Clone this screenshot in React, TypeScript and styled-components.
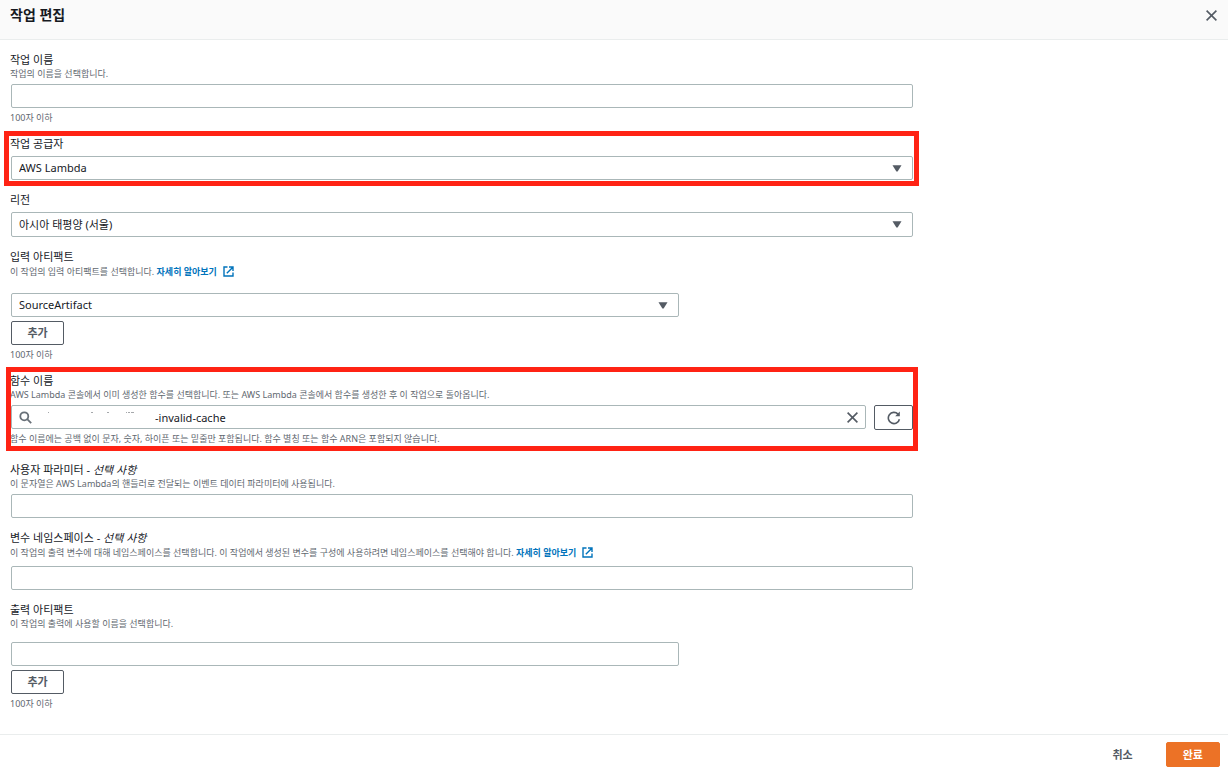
import React, { useState } from "react";
import styled, { createGlobalStyle, css } from "styled-components";

const GlobalStyle = createGlobalStyle`
  *, *::before, *::after { box-sizing: border-box; }
  body {
    margin: 0;
    background: #fff;
    color: #16191f;
    font-family: "Noto Sans", "Noto Sans CJK KR", sans-serif;
    font-size: 11px;
    line-height: 14px;
  }
  button, input, select { font: inherit; color: inherit; margin: 0; }
`;

const Page = styled.div`
  display: flex;
  flex-direction: column;
  min-height: 100vh;
`;

const Header = styled.header`
  display: flex;
  justify-content: space-between;
  align-items: flex-start;
  padding: 5px 10px 14px;
  background: #fafafa;
  border-bottom: 1px solid #eaeded;
`;

const Title = styled.h1`
  margin: 0;
  font-size: 14px;
  line-height: 20px;
  font-weight: 700;
`;

const IconButton = styled.button`
  display: flex;
  align-items: center;
  justify-content: center;
  padding: 0;
  border: 0;
  background: none;
  color: #545b64;
  cursor: pointer;
`;

const CloseButton = styled(IconButton)`
  width: 14px;
  height: 20px;
`;

const Form = styled.form`
  flex: 1;
  display: grid;
  grid-template-columns: 3fr 1fr;
  padding: 13px 14px 23px 11px;
`;

const Fields = styled.div`
  min-width: 0;
`;

const Field = styled.div<{ $gap?: number }>`
  position: relative;
  display: flex;
  flex-direction: column;
  margin-top: ${(p) => p.$gap ?? 0}px;
`;

const Highlight = styled.div<{ $inset: string }>`
  position: absolute;
  inset: ${(p) => p.$inset};
  border: 5px solid #ff2314;
  pointer-events: none;
`;

const Label = styled.label`
  margin-left: -1px;
  line-height: 14px;
`;

const Hint = styled.p<{ $tall?: boolean }>`
  margin: 0 0 0 -1px;
  color: #5f6870;
  font-size: 9px;
  line-height: ${(p) => (p.$tall ? 16 : 14)}px;
`;

const Constraint = styled(Hint)`
  margin-top: 3px;
`;

const InfoLink = styled.a`
  color: #0073bb;
  font-weight: 700;
  text-decoration: none;
  svg { margin-left: 6px; vertical-align: -2px; }
`;

const Control = styled.div<{ $top: number }>`
  position: relative;
  margin-top: ${(p) => p.$top}px;
`;

const box = css`
  display: block;
  width: 100%;
  height: 24px;
  padding: 0 7px;
  border: 1px solid #aab7b8;
  border-radius: 2px;
  background: #fff;
  outline: none;
`;

const TextInput = styled.input`
  ${box}
`;

const SearchInput = styled.input`
  ${box}
  padding: 0 32px 0 143px;
`;

const Select = styled.select<{ $height?: number }>`
  ${box}
  height: ${(p) => p.$height ?? 24}px;
  appearance: none;
`;

const Caret = styled.svg`
  position: absolute;
  right: 11px;
  top: 9px;
  pointer-events: none;
`;

const SearchRow = styled.div`
  display: flex;
  gap: 8px;
  margin-top: 3px;
`;

const SearchBox = styled.div`
  position: relative;
  flex: 1;
`;

const SearchGlyph = styled.svg`
  position: absolute;
  left: 8px;
  top: 6px;
`;

const Residue = styled.svg`
  position: absolute;
  left: 33px;
  top: 7px;
  pointer-events: none;
`;

const ClearButton = styled(IconButton)`
  position: absolute;
  right: 7px;
  top: 5px;
  width: 14px;
  height: 14px;
`;

const RefreshButton = styled(IconButton)`
  width: 39px;
  height: 25px;
  margin-bottom: -1px;
  border: 1px solid #545b64;
  border-radius: 2px;
  background: #fff;
`;

const ItemGrid = styled.div<{ $top: number }>`
  display: grid;
  grid-template-columns: 3fr 1fr;
  column-gap: 12px;
  row-gap: 4px;
  margin-top: ${(p) => p.$top}px;
`;

const Button = styled.button`
  height: 24px;
  padding: 0 16px;
  border: 1px solid #545b64;
  border-radius: 2px;
  background: #fff;
  color: #545b64;
  font-weight: 700;
  line-height: 14px;
  cursor: pointer;
`;

const AddButton = styled(Button)`
  grid-column: 1;
  justify-self: start;
  min-width: 53px;
  padding: 0 15px;
`;

const Footer = styled.footer`
  display: flex;
  justify-content: flex-end;
  gap: 16px;
  padding: 7px 8px 3px;
  border-top: 1px solid #eaeded;
`;

const LinkButton = styled(Button)`
  height: 25px;
  border-color: transparent;
`;

const PrimaryButton = styled(Button)`
  height: 25px;
  border-color: #ec7226;
  background: #ec7226;
  color: #fff;
`;

const Cross = () => (
  <svg width="11" height="11" viewBox="0 0 11 11" fill="none" stroke="currentColor" strokeWidth="1.6" aria-hidden="true">
    <path d="M.6.6l9.8 9.8M10.4.6L.6 10.4" />
  </svg>
);

const External = () => (
  <svg width="11" height="11" viewBox="0 0 11 11" fill="none" stroke="currentColor" strokeWidth="1.4" aria-hidden="true">
    <path d="M4.5 1H1v9h9V6.5M6 1h4v4M9.6 1.4L3.8 7.2" />
  </svg>
);

const Arrow = () => (
  <Caret width="10" height="7" viewBox="0 0 10 7" aria-hidden="true">
    <path d="M.5.2h9L5.6 6.4H4.4z" fill="#545b64" />
  </Caret>
);

export default function App() {
  const [fn, setFn] = useState("-invalid-cache");
  return (
    <Page>
      <GlobalStyle />
      <Header>
        <Title>작업 편집</Title>
        <CloseButton type="button" aria-label="닫기"><Cross /></CloseButton>
      </Header>
      <Form id="action" onSubmit={(e) => e.preventDefault()}>
        <Fields>
          <Field>
            <Label htmlFor="name">작업 이름</Label>
            <Hint>작업의 이름을 선택합니다.</Hint>
            <Control $top={3}><TextInput id="name" /></Control>
            <Constraint>100자 이하</Constraint>
          </Field>
          <Field $gap={12}>
            <Label htmlFor="provider">작업 공급자</Label>
            <Control $top={5}>
              <Select id="provider"><option>AWS Lambda</option></Select>
              <Arrow />
            </Control>
            <Highlight $inset="-6px -6px -6px -7px" />
          </Field>
          <Field $gap={13}>
            <Label htmlFor="region">리전</Label>
            <Control $top={5}>
              <Select id="region" $height={25}><option>아시아 태평양 (서울)</option></Select>
              <Arrow />
            </Control>
          </Field>
          <Field $gap={13}>
            <Label htmlFor="input-artifact">입력 아티팩트</Label>
            <Hint $tall>
              이 작업의 입력 아티팩트를 선택합니다. <InfoLink href="#input-artifacts">자세히 알아보기<External /></InfoLink>
            </Hint>
            <ItemGrid $top={13}>
              <Control $top={0}>
                <Select id="input-artifact"><option>SourceArtifact</option></Select>
                <Arrow />
              </Control>
              <AddButton type="button">추가</AddButton>
            </ItemGrid>
            <Constraint>100자 이하</Constraint>
          </Field>
          <Field $gap={12}>
            <Label htmlFor="function">함수 이름</Label>
            <Hint>AWS Lambda 콘솔에서 이미 생성한 함수를 선택합니다. 또는 AWS Lambda 콘솔에서 함수를 생성한 후 이 작업으로 돌아옵니다.</Hint>
            <SearchRow>
              <SearchBox>
                <SearchInput id="function" value={fn} onChange={(e) => setFn(e.target.value)} />
                <SearchGlyph width="13" height="13" viewBox="0 0 13 13" fill="none" stroke="#687078" strokeWidth="1.8" aria-hidden="true">
                  <circle cx="5.3" cy="5.3" r="4" />
                  <path d="M8.2 8.2l4 4" />
                </SearchGlyph>
                <Residue width="100" height="1" viewBox="0 0 100 1" fill="#a5a8ab" aria-hidden="true">
                  <path d="M4 0h1v1h-1zM47 0h2v1h-2zM63 0h2v1h-2zM82 0h1v1h-1zM84 0h2v1h-2zM87 0h3v1h-3z" />
                </Residue>
                <ClearButton type="button" aria-label="지우기" onClick={() => setFn("")}><Cross /></ClearButton>
              </SearchBox>
              <RefreshButton type="button" aria-label="새로 고침">
                <svg width="14" height="14" viewBox="0 0 14 14" fill="none" stroke="currentColor" strokeWidth="1.6" aria-hidden="true">
                  <path d="M12.4 8.2A5.6 5.6 0 1 1 11 3.1" />
                  <path d="M12.8.6v4.6H8.2z" fill="currentColor" stroke="none" />
                </svg>
              </RefreshButton>
            </SearchRow>
            <Constraint>함수 이름에는 공백 없이 문자, 숫자, 하이픈 또는 밑줄만 포함됩니다. 함수 별칭 또는 함수 ARN은 포함되지 않습니다.</Constraint>
            <Highlight $inset="-7px -5px -5px -5px" />
          </Field>
          <Field $gap={17}>
            <Label htmlFor="params">사용자 파라미터 - <i>선택 사항</i></Label>
            <Hint>이 문자열은 AWS Lambda의 핸들러로 전달되는 이벤트 데이터 파라미터에 사용됩니다.</Hint>
            <Control $top={3}><TextInput id="params" /></Control>
          </Field>
          <Field $gap={13}>
            <Label htmlFor="namespace">변수 네임스페이스 - <i>선택 사항</i></Label>
            <Hint $tall>
              이 작업의 출력 변수에 대해 네임스페이스를 선택합니다. 이 작업에서 생성된 변수를 구성에 사용하려면 네임스페이스를 선택해야 합니다. <InfoLink href="#namespaces">자세히 알아보기<External /></InfoLink>
            </Hint>
            <Control $top={5}><TextInput id="namespace" /></Control>
          </Field>
          <Field $gap={13}>
            <Label htmlFor="output-artifact">출력 아티팩트</Label>
            <Hint>이 작업의 출력에 사용할 이름을 선택합니다.</Hint>
            <ItemGrid $top={11}>
              <TextInput id="output-artifact" />
              <AddButton type="button">추가</AddButton>
            </ItemGrid>
            <Constraint>100자 이하</Constraint>
          </Field>
        </Fields>
      </Form>
      <Footer>
        <LinkButton type="button">취소</LinkButton>
        <PrimaryButton type="submit" form="action">완료</PrimaryButton>
      </Footer>
    </Page>
  );
}
